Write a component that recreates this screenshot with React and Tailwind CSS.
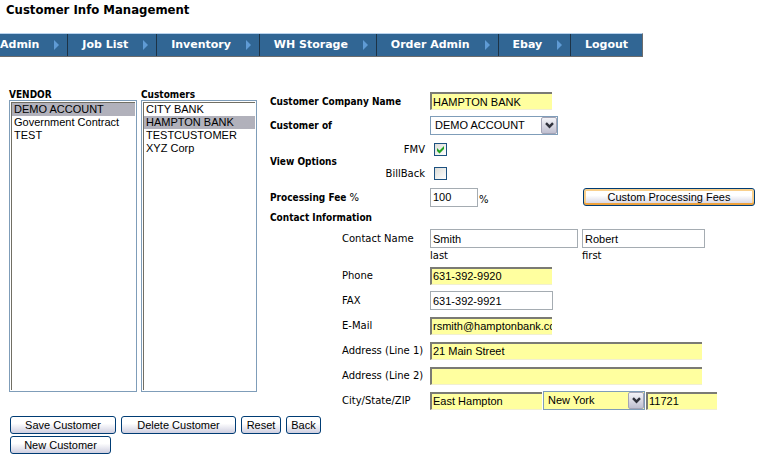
import React from "react";

const menu = [
  { name: "Admin", sub: true },
  { name: "Job List", sub: true },
  { name: "Inventory", sub: true },
  { name: "WH Storage", sub: true },
  { name: "Order Admin", sub: true },
  { name: "Ebay", sub: true },
  { name: "Logout", sub: false },
];

const fieldFont = "font-['Liberation_Sans',sans-serif] text-[11px]";

const boldFont = "font-['DejaVu_Sans_Condensed','DejaVu_Sans',sans-serif] font-bold";

const required =
  "h-[18px] pl-px bg-[#ffff9f] border-t-2 border-l-2 border-b border-t-[#7b7b74] border-l-[#7b7b74] border-b-[#f1efd2] outline-none";

const optional =
  "h-[19px] px-[2px] bg-white border border-[#a5acb2] outline-none";

const Field = ({ id, label, value, needed, width }) => (
  <input
    id={id}
    type="text"
    aria-label={label}
    defaultValue={value}
    className={`${fieldFont} ${needed ? required : optional} ${width}`}
  />
);

const DropDown = ({ id, label, options, width, needed }) => (
  <div className={`relative ${width}`}>
    <select
      id={id}
      aria-label={label}
      className={`${fieldFont} ${
        needed ? "bg-[#ffff9f]" : "bg-white"
      } block w-full h-[19px] appearance-none border border-[#7f9db9] pl-1 pr-5 outline-none`}
    >
      {options.map((option) => (
        <option key={option}>{option}</option>
      ))}
    </select>
    <span className="absolute top-px right-px bottom-px w-4 flex items-center justify-center rounded-xs border border-[#a3a3b5] bg-linear-to-b from-[#f4f4f8] to-[#bfbfd0] pointer-events-none">
      <svg width="9" height="7" viewBox="0 0 9 7" fill="none">
        <path d="M1 1.2L4.5 4.7L8 1.2" stroke="#30323c" strokeWidth="2.4" />
      </svg>
    </span>
  </div>
);

const ListBox = ({ id, label, items, selected, width }) => (
  <div className={width}>
    <label htmlFor={id} className={`block h-[11px] leading-[11px] ${boldFont}`}>
      {label}
    </label>
    <div className="border border-[#7f9db9] p-px">
      <select
        id={id}
        size={20}
        defaultValue={selected}
        className={`${fieldFont} block w-full h-72 border-t border-l border-[#716f64] bg-white p-0 overflow-hidden outline-none`}
      >
        {items.map((item) => (
          <option
            key={item}
            className="h-[13px] min-h-0 leading-[13px] px-[2px] py-0 text-black checked:bg-[#b1b1bb] checked:bg-linear-to-b checked:from-[#b1b1bb] checked:to-[#b1b1bb]"
          >
            {item}
          </option>
        ))}
      </select>
    </div>
  </div>
);

const Check = ({ id, label, checked }) => (
  <div className="flex items-center h-6">
    <label htmlFor={id} className="w-[155px] text-right">
      {label}
    </label>
    <div className="relative ml-[9px] w-[13px] h-[13px]">
      <input
        id={id}
        type="checkbox"
        defaultChecked={checked}
        className="peer block w-[13px] h-[13px] appearance-none border border-[#1c5180] bg-linear-to-br from-[#dcdcd7] to-white"
      />
      <svg
        className="absolute inset-0 hidden peer-checked:block pointer-events-none"
        width="13"
        height="13"
        viewBox="0 0 13 13"
      >
        <path d="M3 5L5.5 7.5L10 3V6L5.5 10.4L3 8Z" fill="#21a121" />
      </svg>
    </div>
  </div>
);

const Button = ({ children, width, focus }) => (
  <button
    type="button"
    className={`${fieldFont} ${width} h-[18px] leading-4 rounded-[3px] border border-[#003c74] bg-linear-to-b from-white from-40% to-[#cfcfe0] ${
      focus ? "shadow-[inset_0_-2px_0_0_#efa23c,inset_0_0_0_2px_#f9d08c]" : ""
    }`}
  >
    {children}
  </button>
);

const ContactRow = ({ id, label, children }) => (
  <div className="flex items-center h-[25px] pl-[72px]">
    <label htmlFor={id} className="w-[88px] shrink-0 whitespace-nowrap">
      {label}
    </label>
    {children}
  </div>
);

const App = () => {
  return (
    <div className="min-h-screen bg-white text-black text-[10px] font-['DejaVu_Sans',sans-serif]">
      <h1 className={`pl-[6px] pt-[2px] h-[33px] leading-4 text-[13px] ${boldFont}`}>
        Customer Info Management
      </h1>

      {/* Menu bar */}
      <nav className="flex w-[643px] h-6 bg-[#316694] border-t border-t-[#b9d3ee] border-b border-r border-b-[#6c6c6c] border-r-[#6c6c6c] text-[11px] font-bold text-white">
        {menu.map((item) => (
          <a
            key={item.name}
            href="#"
            className="flex grow items-center pl-[14px] pr-[13px] whitespace-nowrap border-r border-[#1d3346] first:pl-0 last:border-r-0"
          >
            {item.name}
            {item.sub && (
              <svg
                className="ml-auto -mr-[5px]"
                width="19"
                height="10"
                viewBox="0 0 19 10"
              >
                <path d="M14 0L19 5L14 10Z" fill="#5f9bd5" />
              </svg>
            )}
          </a>
        ))}
      </nav>

      <form className="mt-8">
        <div className="flex">
          {/* Vendor and customer lists */}
          <div className="flex gap-1 pl-[9px]">
            <ListBox
              id="vendor"
              label="VENDOR"
              width="w-32"
              selected="DEMO ACCOUNT"
              items={["DEMO ACCOUNT", "Government Contract", "TEST"]}
            />
            <ListBox
              id="customers"
              label="Customers"
              width="w-[116px]"
              selected="HAMPTON BANK"
              items={["CITY BANK", "HAMPTON BANK", "TESTCUSTOMER", "XYZ Corp"]}
            />
          </div>

          {/* Customer details */}
          <div className="pl-[13px]">
            <div className="flex items-center h-6">
              <label
                htmlFor="company"
                className={`w-40 whitespace-nowrap ${boldFont}`}
              >
                Customer Company Name
              </label>
              <Field id="company" value="HAMPTON BANK" needed width="w-[122px]" />
            </div>
            <div className="flex items-center h-6">
              <label htmlFor="owner" className={`w-40 ${boldFont}`}>
                Customer of
              </label>
              <DropDown
                id="owner"
                width="w-32"
                options={["DEMO ACCOUNT", "Government Contract", "TEST"]}
              />
            </div>
            <div className="flex items-center">
              <span className={`w-20 -mr-20 ${boldFont}`}>View Options</span>
              <div>
                <Check id="fmv" label="FMV" checked />
                <Check id="billback" label="BillBack" />
              </div>
            </div>
            <div className="flex items-center h-6">
              <label htmlFor="fee" className="w-40">
                <b className={boldFont}>Processing Fee</b> %
              </label>
              <Field id="fee" value="100" width="w-12" />
              <span className="w-[105px] pl-px pt-1">%</span>
              <Button width="w-[172px]" focus>
                Custom Processing Fees
              </Button>
            </div>

            {/* Contact info */}
            <h2 className={`h-[18px] leading-[18px] ${boldFont}`}>
              Contact Information
            </h2>
            <div className="flex pl-[72px] h-9">
              <span className="w-[88px] leading-6">Contact Name</span>
              <div className="flex gap-1 pt-[2px]">
                <div>
                  <Field id="last" value="Smith" width="block w-37" />
                  <label htmlFor="last" className="block leading-4">
                    last
                  </label>
                </div>
                <div>
                  <Field id="first" value="Robert" width="block w-[123px]" />
                  <label htmlFor="first" className="block leading-4">
                    first
                  </label>
                </div>
              </div>
            </div>
            <ContactRow id="phone" label="Phone">
              <Field id="phone" value="631-392-9920" needed width="w-[122px]" />
            </ContactRow>
            <ContactRow id="fax" label="FAX">
              <Field id="fax" value="631-392-9921" width="w-[123px]" />
            </ContactRow>
            <ContactRow id="email" label="E-Mail">
              <Field
                id="email"
                value="rsmith@hamptonbank.com"
                needed
                width="w-[122px]"
              />
            </ContactRow>
            <ContactRow id="address1" label="Address (Line 1)">
              <Field id="address1" value="21 Main Street" needed width="w-68" />
            </ContactRow>
            <ContactRow id="address2" label="Address (Line 2)">
              <Field id="address2" value="" needed width="w-68" />
            </ContactRow>
            <ContactRow id="city" label="City/State/ZIP">
              <div className="flex items-center gap-px">
                <Field id="city" value="East Hampton" needed width="w-28" />
                <DropDown
                  id="state"
                  label="State"
                  width="w-[102px]"
                  needed
                  options={["New York", "New Jersey", "Connecticut"]}
                />
                <Field id="zip" label="ZIP" value="11721" needed width="w-[71px]" />
              </div>
            </ContactRow>
          </div>
        </div>

        {/* Actions */}
        <div className="flex flex-col gap-[2px] pl-[10px] pt-[3px]">
          <div className="flex gap-[5px]">
            <Button width="w-[106px]">Save Customer</Button>
            <Button width="w-[115px]">Delete Customer</Button>
            <Button width="w-10">Reset</Button>
            <Button width="w-[35px]">Back</Button>
          </div>
          <Button width="w-[101px]">New Customer</Button>
        </div>
      </form>
    </div>
  );
};

export default App;
